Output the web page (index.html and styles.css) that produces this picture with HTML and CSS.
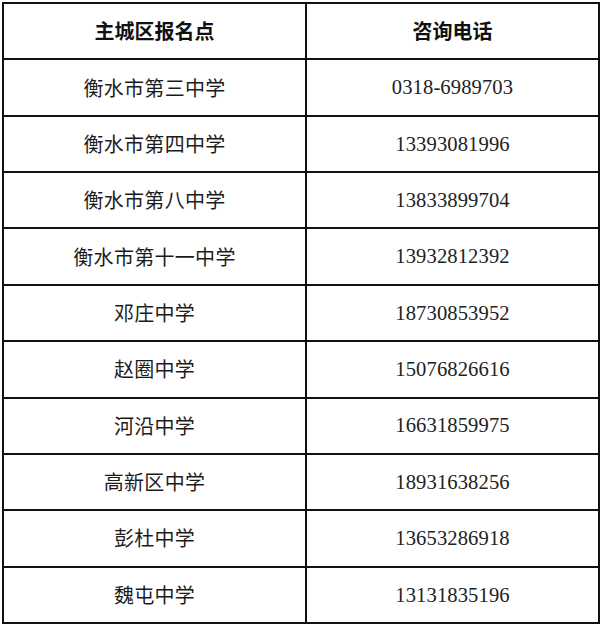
FILE: index.html
```html
<!DOCTYPE html>
<html lang="zh">
<head>
<meta charset="utf-8">
<link rel="stylesheet" href="styles.css">
</head>
<body>
<div class="table">
  <div class="cell head">主城区报名点</div>
  <div class="cell head">咨询电话</div>
  <div class="cell name">衡水市第三中学</div>
  <div class="cell tel">0318-6989703</div>
  <div class="cell name">衡水市第四中学</div>
  <div class="cell tel">13393081996</div>
  <div class="cell name">衡水市第八中学</div>
  <div class="cell tel">13833899704</div>
  <div class="cell name">衡水市第十一中学</div>
  <div class="cell tel">13932812392</div>
  <div class="cell name">邓庄中学</div>
  <div class="cell tel">18730853952</div>
  <div class="cell name">赵圈中学</div>
  <div class="cell tel">15076826616</div>
  <div class="cell name">河沿中学</div>
  <div class="cell tel">16631859975</div>
  <div class="cell name">高新区中学</div>
  <div class="cell tel">18931638256</div>
  <div class="cell name">彭杜中学</div>
  <div class="cell tel">13653286918</div>
  <div class="cell name">魏屯中学</div>
  <div class="cell tel">13131835196</div>
</div>
</body>
</html>
```

FILE: styles.css
```css
html, body {
  margin: 0;
  padding: 0;
  background: #fff;
}
.table {
  margin: 2px 0 0 2px;
  width: 598px;
  height: 622px;
  box-sizing: border-box;
  background: #111;
  padding: 2px;
  display: grid;
  grid-template-columns: 301px 1fr;
  grid-template-rows: repeat(11, 1fr);
  gap: 2px;
}
.cell {
  background: #fff;
  display: flex;
  align-items: center;
  justify-content: center;
  color: #1c1c1c;
  font-size: 20px;
  line-height: 1;
}
.head {
  font-family: "Noto Sans CJK SC", sans-serif;
  font-weight: 700;
  color: #111;
}
.name {
  font-family: "Noto Sans CJK SC", sans-serif;
  font-weight: 400;
  letter-spacing: 0.3px;
}
.tel {
  font-family: "Liberation Serif", "Noto Sans CJK SC", serif;
  font-size: 20.6px;
  letter-spacing: 0.1px;
  color: #222;
}
```
